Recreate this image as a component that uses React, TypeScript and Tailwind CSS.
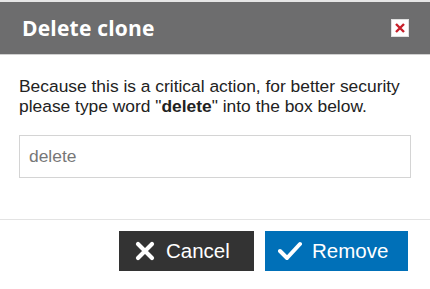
import React from 'react';

export default function App() {
    return (
        <div className="w-[430px] h-[289px] bg-white flex flex-col">
            <div className="h-[2px] bg-[#e6e6e6]" />
            {/* Header */}
            <div className="h-[53px] bg-[#6d6d6e] flex items-center justify-between pl-[22px] pr-[21px] border-b border-[#d0d0d0]">
                <span className="text-white font-bold text-[21px] mt-[2px] font-['Open_Sans',sans-serif] tracking-[0.2px]">Delete clone</span>
                <button className="w-[18px] h-[18px] bg-white border border-[#e0e0e0] flex items-center justify-center">
                    <svg width="12" height="12" viewBox="0 0 12 12">
                        <path d="M2 2 L10 10 M10 2 L2 10" stroke="#c8202a" strokeWidth="2.4" />
                    </svg>
                </button>
            </div>

            {/* Body */}
            <div className="flex flex-col px-[19px] pt-[21px] font-['Liberation_Sans',Arial,sans-serif]">
                <p className="text-[17.4px] leading-[20px] text-[#222]">
                    Because this is a critical action, for better security please type word "<b>delete</b>" into the box below.
                </p>
                <input
                    className="mt-[19px] h-[43px] w-[392px] border border-[#d4d4d4] px-[9px] text-[17.4px] text-[#777] outline-none"
                    defaultValue="delete"
                />
            </div>

            <div className="mt-[41px] border-t border-[#e3e3e3]" />

            {/* Footer */}
            <div className="flex justify-end gap-[11px] pr-[22px] pt-[11px] font-['Liberation_Sans',Arial,sans-serif]">
                <button className="w-[135px] h-[40px] bg-[#333333] text-white text-[20.5px] flex items-center pl-[16px] gap-[11px]">
                    <svg width="20" height="20" viewBox="0 0 20 20">
                        <path d="M3 3 L17 17 M17 3 L3 17" stroke="white" strokeWidth="4.2" strokeLinecap="round" />
                    </svg>
                    Cancel
                </button>
                <button className="w-[143px] h-[40px] bg-[#0070b8] text-white text-[20.5px] flex items-center pl-[13px] gap-[10px]">
                    <svg width="24" height="20" viewBox="0 0 24 20">
                        <path d="M2 10 L9 17 L22 3" stroke="white" strokeWidth="4" fill="none" strokeLinecap="round" strokeLinejoin="round" />
                    </svg>
                    Remove
                </button>
            </div>
        </div>
    );
}
